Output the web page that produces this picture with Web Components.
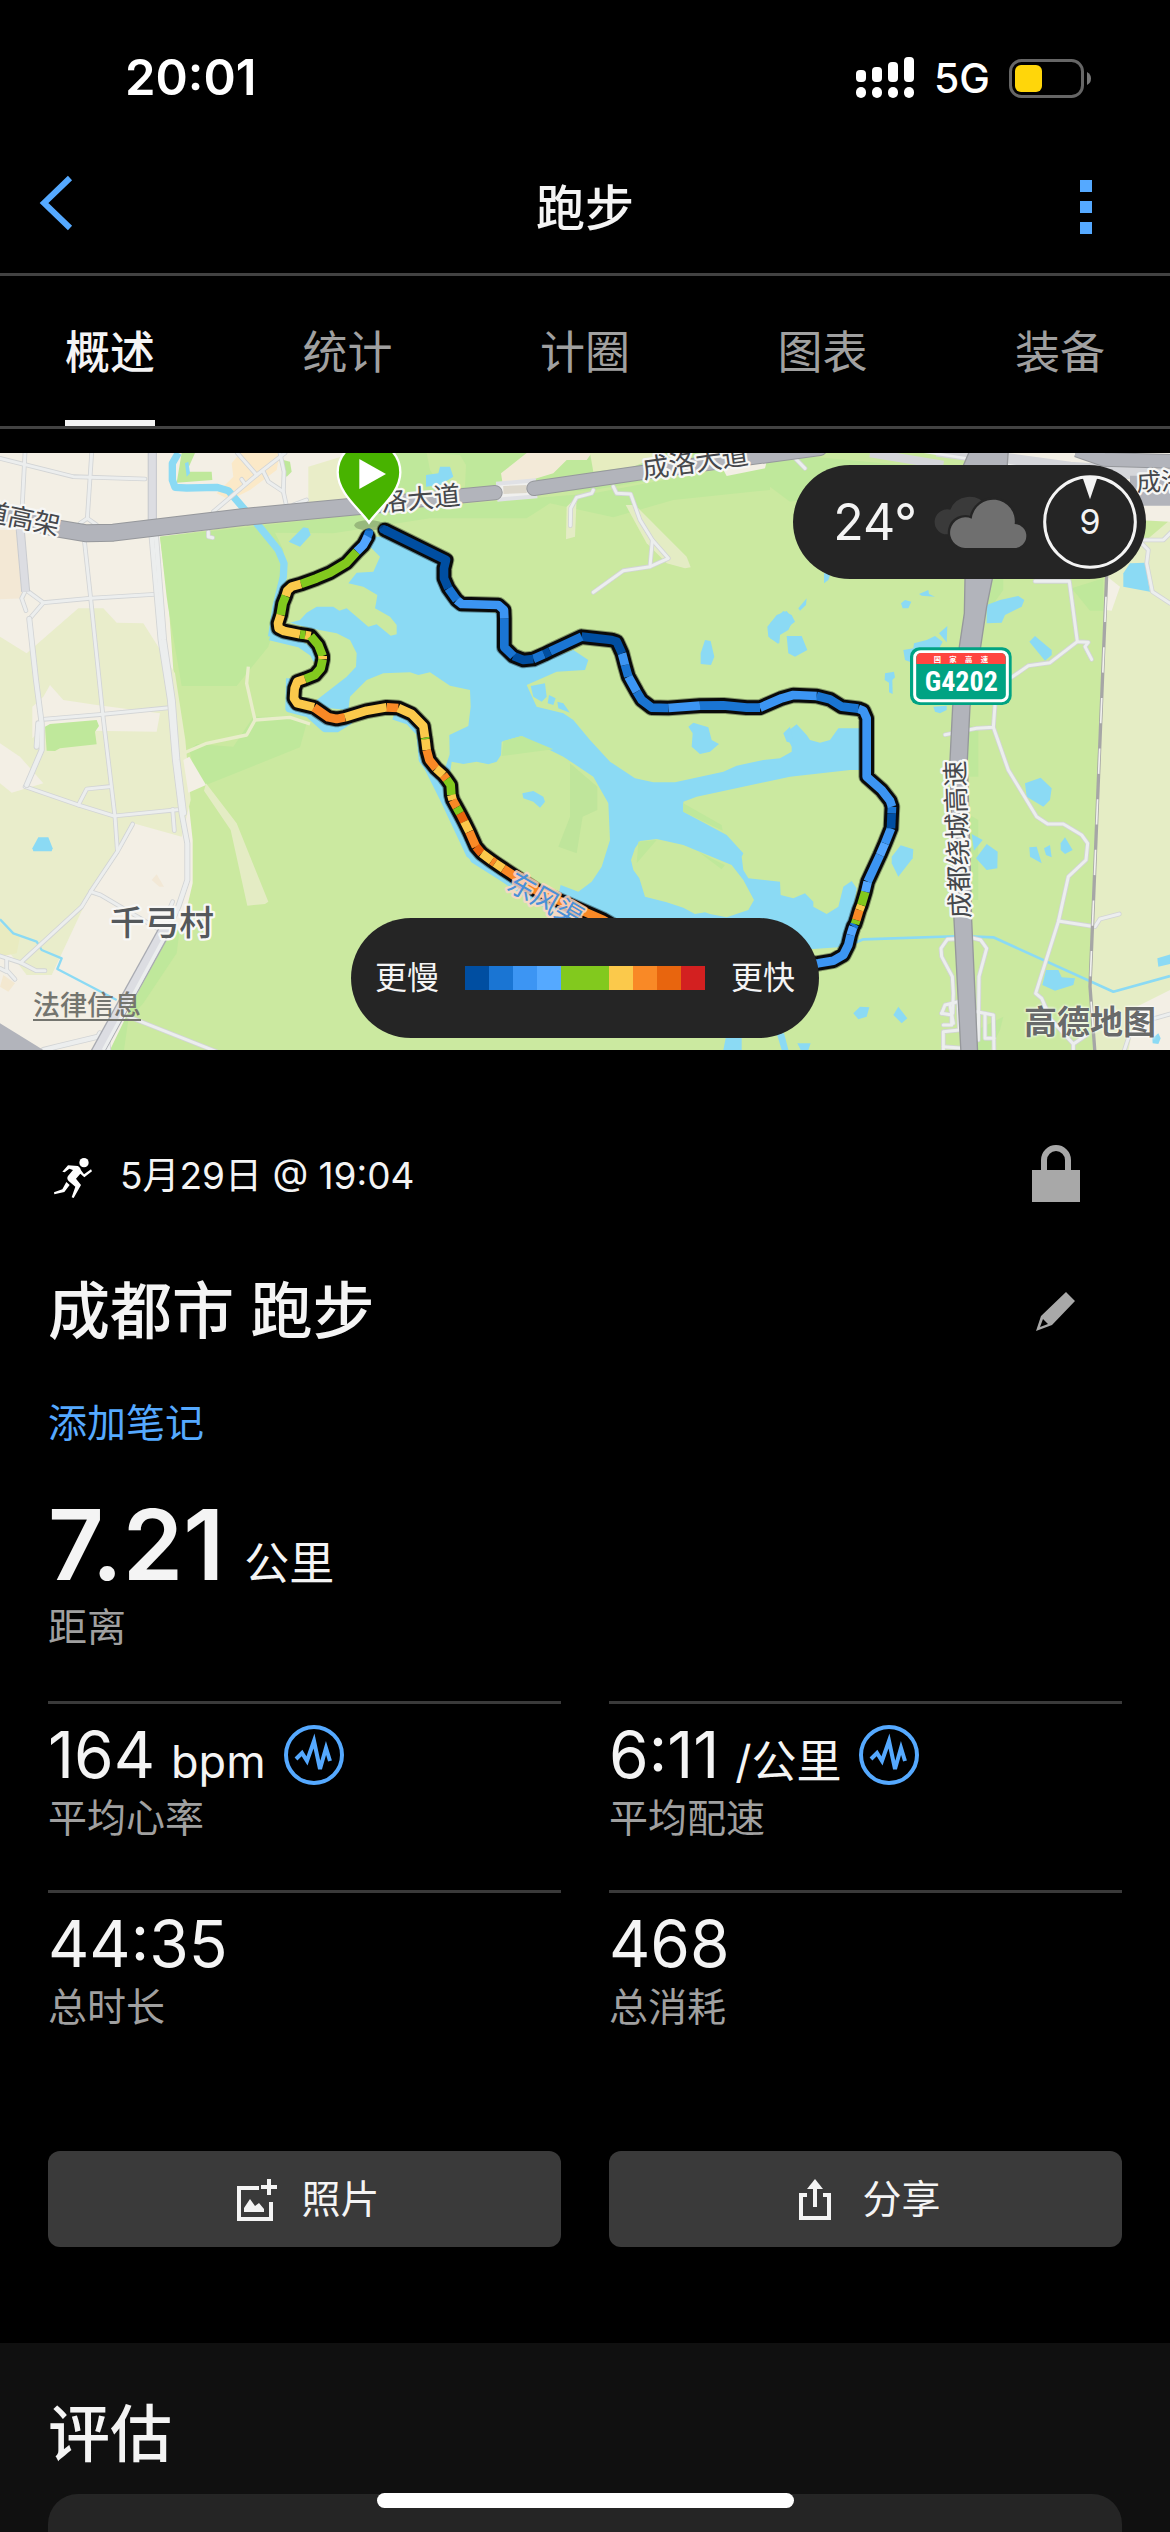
<!DOCTYPE html>
<html lang="zh-CN">
<head>
<meta charset="utf-8">
<meta name="viewport" content="width=device-width, initial-scale=1">
<title>跑步</title>
<style>
  html, body { margin: 0; background: #000; }
  body {
    color: #f4f4f4;
    font-family: Inter, "Noto Sans CJK SC", sans-serif;
    -webkit-font-smoothing: antialiased;
  }
</style>
</head>
<body>
<activity-page>
  <status-bar slot="top" time="20:01" network="5G"></status-bar>
  <nav-header slot="top">跑步</nav-header>
  <tab-bar slot="top">
    <tab-item selected>概述</tab-item>
    <tab-item>统计</tab-item>
    <tab-item>计圈</tab-item>
    <tab-item>图表</tab-item>
    <tab-item>装备</tab-item>
  </tab-bar>
  <route-map>
    <weather-pill slot="weather" wind="9">24°</weather-pill>
    <pace-legend slot="legend"><span slot="slow">更慢</span><span slot="fast">更快</span></pace-legend>
    <a slot="legal" href="#legal">法律信息</a>
    <span slot="provider">高德地图</span>
  </route-map>
  <activity-details date="5月29日 @ 19:04" name="成都市 跑步" note="添加笔记">
    <stat-cell slot="hero" large value="7.21" unit="公里" label="距离"></stat-cell>
    <stat-cell value="164" unit="bpm" label="平均心率" chart></stat-cell>
    <stat-cell value="6:11" unit="/公里" label="平均配速" chart></stat-cell>
    <stat-cell value="44:35" label="总时长"></stat-cell>
    <stat-cell value="468" label="总消耗"></stat-cell>
    <action-button slot="actions" icon="photo">照片</action-button>
    <action-button slot="actions" icon="share">分享</action-button>
  </activity-details>
  <assess-section>评估</assess-section>
  <home-indicator></home-indicator>
</activity-page>

<script>
const define = (name, render) => customElements.define(name, class extends HTMLElement {
  constructor() {
    super();
    this.attachShadow({ mode: 'open' });
  }
  connectedCallback() {
    this.shadowRoot.innerHTML = '<style>*{box-sizing:border-box}:host{display:block;box-sizing:border-box}svg{display:block;flex:none}button{font:inherit;color:inherit;background:none;border:0;padding:0;margin:0}</style>' + render(this);
  }
});

define('activity-page', () => `
  <style>
    :host { display: flex; flex-direction: column; height: 100vh; overflow: hidden; }
    header { flex: none; }
    main { display: flex; flex-direction: column; flex: 1; margin-top: 24px; }
  </style>
  <header><slot name="top"></slot></header>
  <main><slot></slot></main>`);

define('status-bar', el => `
  <style>
    :host { display: flex; justify-content: space-between; align-items: center; padding: 48px 78px 33px 125px; color: #fff; }
    time { font-size: 49px; line-height: 60px; font-weight: 600; }
    div { display: flex; align-items: center; }
    span { font-size: 41px; line-height: 60px; font-weight: 500; margin: 0 19px; }
  </style>
  <time>${el.getAttribute('time')}</time>
  <div>
    <svg width="60" height="42" viewBox="0 0 60 42" fill="#fff">
      <rect x="1" y="13" width="10" height="12" rx="4"/><rect x="17" y="10" width="10" height="15" rx="4"/>
      <rect x="33" y="5" width="10" height="20" rx="4"/><rect x="49" y="0" width="10" height="25" rx="4"/>
      <rect x="1" y="30" width="10" height="11" rx="5"/><rect x="17" y="30" width="10" height="11" rx="5"/>
      <rect x="33" y="30" width="10" height="11" rx="5"/><rect x="49" y="30" width="10" height="11" rx="5"/>
    </svg>
    <span>${el.getAttribute('network')}</span>
    <svg width="83" height="39" viewBox="0 0 83 39">
      <rect x="1.5" y="1.5" width="72" height="36" rx="11" fill="none" stroke="#666" stroke-width="3"/>
      <rect x="6" y="6" width="27" height="27" rx="6" fill="#ffd60a"/>
      <path d="M78 13q4 2 4 6.500t-4 6.500z" fill="#777"/>
    </svg>
  </div>`);

define('nav-header', () => `
  <style>
    :host { display: grid; grid-template-columns: 1fr auto 1fr; align-items: center; height: 135px; padding: 0 36px; border-bottom: 3px solid #424242; }
    h1 { margin: 0; padding-top: 3px; font-size: 49px; line-height: 66px; font-weight: 500; }
    button:last-child { justify-self: end; }
  </style>
  <button type="button" aria-label="返回"><svg width="60" height="66" viewBox="0 0 60 66"><path d="M34 4L8 29L34 54" fill="none" stroke="#55a9ff" stroke-width="6"/></svg></button>
  <h1><slot></slot></h1>
  <button type="button" aria-label="更多"><svg width="60" height="66" viewBox="0 0 60 66" fill="#55a9ff"><path d="M6 6h12v12H6zM6 27h12v12H6zM6 48h12v12H6z"/></svg></button>`);

define('tab-bar', () => `
  <style>
    :host { display: flex; justify-content: space-between; padding: 0 65px; border-bottom: 3px solid #424242; }
  </style><slot></slot>`);

define('tab-item', el => `
  <style>
    button { display: block; height: 150px; padding-top: 9px; font-size: 45px; line-height: 60px; border-bottom: 6px solid transparent; color: #a0a0a0; }
    :host([selected]) button { color: #f4f4f4; font-weight: 500; border-color: #f4f4f4; }
  </style>
  <button type="button" role="tab" aria-selected="${el.hasAttribute('selected')}"><slot></slot></button>`);

/* Map geometry is kept in thirds of a CSS pixel; the lower tiles start at y=900. */
const R = 2310, M = 1170;
const shift = (dx, dy, pts) => pts.trim().split(/\s+/).map(p => { const [x, y] = p.split(',').map(Number); return (x + dx) + ',' + (y + dy); }).join(' ');
const poly = (fill, dx, dy, pts) => `<polygon fill="${fill}" points="${shift(dx, dy, pts)}"/>`;
const polys = (fill, list) => list.map(([dx, dy, p]) => poly(fill, dx, dy, p)).join('');
const line = (stroke, w, dx, dy, pts, cap = 'butt') => `<polyline fill="none" stroke="${stroke}" stroke-width="${w}" stroke-linejoin="round" stroke-linecap="${cap}" points="${shift(dx, dy, pts)}"/>`;
const roads = (list, w = 14) => list.map(([dx, dy, p]) => line('#d2d4d5', w, dx, dy, p, 'round')).join('') + list.map(([dx, dy, p]) => line('#eceeee', w - 5, dx, dy, p, 'round')).join('');

const WATER = '#8bdaf4', GREEN = '#cbe9a0', MID = '#bfe89b', BEIGE = '#f3efe5', OLIVE = '#e9edcb';

const land = () =>
  poly(GREEN, 0, 0, '0,0 3510,0 3510,1860 0,1860') +
  poly(BEIGE, 0, 0, '0,0 1060,0 1060,210 480,290 505,480 520,690 550,900 565,1080 578,1200 578,1330 550,1450 480,1600 400,1700 330,1860 0,1860') +
  poly(OLIVE, 0, 0, '0,590 80,640 235,505 310,505 350,548 430,550 525,700 556,900 572,1080 545,1190 400,1150 270,1360 155,1605 80,1605 0,1500') +
  poly('#f3e8d5', 0, 0, '0,270 55,270 75,475 0,478') +
  poly(BEIGE, 0, 0, '97,800 130,770 150,735 190,780 290,795 480,820 470,875 125,870 97,895') +
  poly(BEIGE, 0, 0, '0,910 60,950 130,1030 35,1058 0,1030') +
  poly('#e9ebc0', 0, 0, '0,1450 60,1490 50,1540 0,1550') +
  poly('#f3e8d0', 0, 0, '10,1605 45,1630 25,1655 0,1640') +
  poly('#f2e8d6', 0, 0, '470,1303 492,1340 478,1340 455,1320') +
  poly('#fbe9c8', 0, 0, '720,39 840,39 830,90 750,150 690,180 650,160 700,110 695,70') +
  poly('#e9edc8', 0, 0, '925,80 1060,39 1060,200 925,190') +
  poly(MID, 0, 0, '850,60 870,65 875,95 860,110 848,100') +
  poly(MID, 0, 0, '545,39 585,39 560,95 635,95 637,120 530,128') +
  poly(MID, 0, 0, '480,290 800,255 1290,200 1650,170 1780,160 2310,60 2310,150 2020,180 1840,232 1650,190 1580,235 1290,235 1000,280 825,278 850,330 850,400 835,520 805,620 710,738 545,738 505,505 500,470') +
  poly(MID, 0, 0, '1060,39 2400,39 2310,60 1780,150 1500,165 1290,200 1060,205') +
  poly(GREEN, 0, 0, '1280,39 1380,45 1398,75 1395,140 1330,150 1290,90') +
  poly('#f3ead8', 0, 0, '1580,39 1775,39 1760,60 1700,60 1660,100 1510,145 1503,100') +
  poly('#e6edc0', 0, 0, '1770,39 2000,39 1900,80 1780,95') +
  poly(BEIGE, 0, 0, '2165,80 2300,65 2295,85 2180,108') +
  poly(MID, 0, 900, '568,30 590,12 700,20 760,-70 870,-70 920,-50 900,22 618,135 580,80') +
  poly(BEIGE, 0, 900, '550,60 568,50 618,135 565,158') +
  poly('#e4ecc4', 0, 900, '618,130 710,250 805,485 795,492 742,497 692,270 612,152') +
  line(OLIVE, 10, 0, 0, '745,680 740,730 765,840 870,832 930,852') +
  line(OLIVE, 10, 0, 0, '765,840 740,885 620,910 550,940') +
  poly(MID, 0, 0, '135,860 150,852 290,840 297,858 285,875 290,913 180,925 165,933 140,932') +
  poly(MID, 0, 900, '540,560 530,640 430,790 385,840 372,930 330,930 480,620') +
  poly('#e4ecc4', M, 0, '530,200 560,170 555,290 528,298') +
  poly('#e4ecc4', M, 0, '707,195 735,195 890,350 902,382 885,385 830,370 770,310') +
  poly(MID, R, 0, '0,39 400,75 100,180 60,185 0,140') +
  poly(MID, R, 0, '660,415 700,415 700,450 650,520') +
  poly(MID, R, 0, '905,445 1000,415 1000,512 960,512') +
  poly(MID, R, 0, '590,850 625,870 625,1010 590,1010') +
  poly(MID, R, 900, '590,220 625,240 625,480 600,480') +
  poly(MID, R, 900, '620,870 700,830 690,870 660,930 620,930') +
  poly('#e5edc5', R, 0, '1012,400 1200,240 1200,1860 975,1860 960,1640 990,900') +
  poly(BEIGE, R, 0, '700,39 1200,39 1200,245 1100,240') +
  poly('#f3f0e6', R, 0, '1012,410 1050,440 1025,512 1008,510') +
  poly(BEIGE, R, 900, '1100,800 1200,750 1200,960 1070,960');

const water = () => polys(WATER, [
  [0, 0, `1110,290 1200,290 1330,370 1335,430 1370,505 1500,520 1510,640 1550,675 1600,670 1720,630 1765,660 1755,690 1670,695
    1580,735 1610,800 1690,820 1720,840 1770,900 1830,965 1905,1015 1960,1027 2025,1027 2170,995 2210,977 2290,960 2340,955 2375,935 2375,920 2355,880 2390,853
    2420,885 2430,900 2460,908 2490,900 2515,865 2600,865 2600,990 2550,990 2370,1010 2090,1070 2050,1085 2050,1115 2180,1185 2230,1240 2225,1250 2230,1290
    2245,1315 2340,1325 2342,1365 2380,1375 2415,1360 2440,1385 2440,1400 2480,1422 2515,1400 2530,1340 2555,1323 2570,1345 2550,1480 2515,1522 2440,1527
    2300,1520 1800,1460 1600,1390 1400,1250 1320,1080 1260,960 1262,880 1340,1000 1330,1000
    1350,940 1355,965 1390,972 1430,965 1465,973 1490,965 1503,945 1505,905 1565,888 1690,950 1780,1010 1825,1090 1830,1200 1805,1280 1775,1325 1735,1355
    1682,1335 1675,1350 1600,1330 1500,1200 1350,1000 1348,885 1405,858 1412,800 1410,750 1350,737 1290,697 1255,705 1230,697 1150,700 1100,720 1050,770 1045,810
    940,800 950,780 1040,710 1068,680 1070,640 1050,600 1010,580 930,565 870,548 900,540 920,518 950,500 1000,500 1018,512 1040,505 1070,530 1105,560 1130,553
    1172,587 1190,583 1190,555 1170,530 1125,505 1128,490 1132,465 1090,440 1045,430 1070,398 1120,395 1140,350 1110,320`]
  ]) +
  /* land along the southern shore, beneath the track */
  poly(GREEN, 0, 0, '1350,1000 1355,965 1390,972 1430,965 1465,973 1490,965 1503,945 1505,905 1565,888 1690,950 1780,1010 1825,1090 1830,1200 1805,1280 1775,1325 1735,1355 1682,1335 1675,1365 1590,1340 1440,1235 1380,1100 1350,1030') +
  poly('#bfe59b', M, 900, '540,70 622,140 622,210 578,230 560,340 505,320 540,230') +
  poly(MID, M, 0, '340,903 395,888 490,928 335,948') +
  poly(MID, M, 900, '880,190 995,255 998,272 880,215') +
  poly(GREEN, M, 900, '723,360 735,325 750,303 800,297 880,315 1025,375 1060,420 1092,480 1075,510 1010,532 960,522 945,517 915,522 880,503 830,487 765,470 748,415 730,390') +
  poly(MID, M, 900, '745,305 800,300 740,370') + poly(MID, M, 900, '925,335 1005,375 995,388') +
  line(WATER, 22, 0, 0, '535,39 517,70 517,120 525,142 560,144 650,142 685,152 780,262 835,330 852,370 850,410 828,500 815,590') +
  line(WATER, 22, 0, 0, '810,590 900,612 940,640 950,660') +
  line(WATER, 24, 0, 0, '870,715 868,805 925,820 975,865 1010,865 1050,840') +
  line(WATER, 18, 0, 0, '1180,830 1225,845 1258,880 1265,960 1330,1050 1350,1120 1420,1260 1530,1330 1800,1450') +
  polys(WATER, [
    [0, 0, '866,305 910,262 925,265 932,285 900,320'], [0, 0, '555,70 565,65 570,100 560,110'],
    [0, 900, '115,292 145,292 158,325 155,334 100,334 97,325'],
    [M, 0, '108,105 145,100 150,80 180,80 190,110 150,135 108,140'],
    [M, 0, '422,738 465,730 470,770 455,785 430,770'], [M, 0, '477,765 497,775 490,795 473,790'], [M, 0, '502,785 520,790 540,818 505,805'],
    [M, 0, '945,600 962,603 973,650 963,675 932,672 932,640'],
    [M, 0, '895,860 910,848 955,862 965,900 987,912 960,935 930,942 905,920 908,880'],
    [M, 0, '1132,560 1160,525 1190,513 1210,540 1195,570 1170,585 1165,612 1135,590'],
    [M, 900, '397,160 430,153 460,170 465,185 450,203 430,185 400,175'],
    [R, 0, '0,550 40,513 65,525 75,545 30,580 28,610 0,595'], [R, 0, '50,588 95,588 112,630 75,650 55,640'],
    [R, 0, '85,505 110,475 108,495 90,512'], [R, 0, '393,490 405,480 424,485 415,505 398,505'], [R, 0, '447,462 475,450 477,462 495,470 455,467'],
    [R, 0, '162,400 182,400 175,420 162,430'], [R, 0, '650,495 690,480 745,468 763,480 755,500 705,525 695,548 650,550'],
    [R, 0, '507,580 532,558 530,607'], [R, 0, '400,630 430,625 432,610 470,600 495,588 518,605 500,640 430,670 405,660'],
    [R, 0, '345,700 372,695 375,712 367,720 368,762 357,757 357,728 344,720'], [R, 0, '778,605 795,588 845,630 845,645 825,662'],
    [R, 0, '490,800 530,797 530,810 510,820 495,815'], [R, 0, '1060,400 1080,370 1125,368 1140,455 1060,440'],
    [R, 900, '765,130 812,113 845,145 840,180 820,200 770,170'], [R, 900, '365,350 392,316 430,328 428,355 385,410 365,370'],
    [R, 900, '605,282 638,300 612,332'], [R, 900, '618,355 650,312 683,335 682,385 650,390'], [R, 900, '778,322 800,320 815,370 780,350'],
    [R, 900, '822,325 840,315 845,352 828,345'], [R, 900, '872,310 885,292 908,330 885,342 872,330'],
    [R, 900, '828,690 865,690 875,712 915,715 910,735 855,752 817,735'], [R, 900, '250,820 270,800 298,802 290,830 265,838'],
    [R, 900, '370,825 385,800 412,835 395,850'], [R, 900, '1162,655 1210,640 1210,670 1165,680'], [R, 900, '1147,895 1165,880 1172,895 1165,912 1148,910'],
    [R, 900, '20,880 42,880 58,940 38,940'], [R, 900, '82,910 122,910 115,930 92,930'], [M, 900, '1010,880 1055,880 1055,940 998,940'],
    [M, 0, '1180,880 1200,860 1210,910 1190,905']
  ]) +
  line(WATER, 8, R, 900, '255,608 280,598 580,588 670,592 1030,755 1200,708') +
  line(WATER, 7, 0, 900, '0,538 40,580 110,605 125,630 185,655 172,687 350,780');

const roadNet = () =>
  roads([[0, 0, '75,39 65,230'], [0, 0, '0,55 220,110 435,117'], [0, 0, '275,39 262,235 240,250'], [0, 0, '262,235 290,255'],
    [0, 0, '253,300 272,475 308,820 345,1130 352,1230'], [0, 0, '480,462 270,475 130,488 85,455'], [0, 0, '75,455 65,475 78,512'], [0, 0, '130,488 88,537'],
    [0, 0, '508,803 308,823 130,838'], [0, 900, '75,140 235,195 342,228 545,208'], [0, 900, '328,140 260,147 235,195'], [0, 900, '518,208 523,272'],
    [0, 900, '398,252 352,335 272,455 245,500 62,668'], [0, 900, '272,455 302,465 480,570'], [0, 900, '0,648 62,668 108,692 135,692'], [0, 900, '20,655 20,690 45,718'], [0, 900, '0,685 20,695'],
    [0, 0, '640,215 770,105 855,39'], [0, 0, '712,39 770,105'], [0, 0, '840,39 852,95 850,155 860,200'], [0, 0, '790,95 805,125 850,155'], [0, 0, '725,118 735,132'], [0, 0, '880,195 920,180'],
    [0, 0, '625,275 625,290 638,293'], [0, 900, '385,830 650,935'], [0, 900, '518,485 505,515'],
    [M, 0, '610,150 605,160 560,172 542,205 541,257'], [M, 0, '670,140 680,160 722,162 750,240 787,300 835,355 780,380 700,392 610,457'], [M, 0, '787,300 780,380'],
    [R, 0, '60,39 105,85'], [R, 0, '795,424 898,424 922,605 955,607 945,620 965,658'], [R, 0, '922,605 840,668 775,677 725,712'], [R, 0, '675,795 670,862 620,865 525,884'],
    [R, 0, '670,862 715,990 800,1130 833,1152 880,1152 935,1185 953,1210 948,1260 895,1310 865,1445 797,1660 815,1675 835,1720'], [R, 900, '865,543 975,560 990,537 1048,522'],
    [R, 0, '1110,300 1180,300 1210,270'], [R, 0, '1110,305 1135,330 1130,370 1147,455 1200,490'],
    [R, 900, '600,595 532,598 513,625 515,650 547,710 550,760 548,820'], [R, 900, '600,592 632,600 650,625 627,710 625,900'],
    [R, 900, '515,820 525,795 565,785 568,870 520,875 520,935'], [R, 900, '515,820 545,825 545,855 520,855'], [R, 900, '540,795 550,850'], [R, 900, '520,920 580,925'],
    [R, 900, '620,815 670,825 672,930'], [R, 900, '645,820 645,895 672,895'], [R, 900, '835,830 910,912 950,885'], [R, 900, '910,912 910,935'], [R, 900, '1060,940 1080,880'], [R, 900, '1155,835 1200,822']
  ]) +
  line('#c9cbcf', 28, 0, 0, '457,39 457,290') + line('#dcdde2', 21, 0, 0, '457,39 457,290') +
  line('#c9cbcf', 27, 0, 0, '60,260 77,455') + line('#dcdde2', 21, 0, 0, '60,260 77,455') +
  roads([[0, 0, '455,290 482,600 510,780 525,960 545,1120 562,1210 562,1320 535,1400 500,1480'], [0, 0, '468,290 492,600 518,780 532,960 552,1120'],
    [0, 0, '88,537 108,720 125,850 125,930 80,1035'], [0, 0, '115,850 110,920'],
    [0, 900, '300,880 295,890 170,920 130,930'], [0, 900, '320,880 325,940'], [0, 900, '0,905 50,935']], 18) +
  line('#a9abb2', 40, 0, 900, '500,560 290,940') + line('#dcdde2', 32, 0, 900, '500,560 290,940') + line('#eceeee', 10, 0, 900, '500,580 310,930') +
  poly('#b2b4bb', 0, 900, '0,850 130,930 130,960 0,960') +
  line('#e0e1e5', 60, 1490, 0, '0,155 120,145') + line('#f0f0ee', 36, 1490, 0, '0,155 120,145') + line('#ddd8cc', 24, 1510, 0, '0,150 70,147') +
  [['0,220 170,265 260,280 340,278 740,230 1200,187', 54], ['1150,190 1485,158', 46], ['1602,145 2000,87 2460,25', 46]].map(([p, w]) => line('#96989c', w, 0, 0, p, 'round') + line('#b2b4bb', w - 6, 0, 0, p, 'round')).join('') +
  line('#d5d6da', 26, R, 0, '300,39 520,75') + line('#d5d6da', 40, R, 0, '500,30 900,85 1200,105') + line('#eceeee', 8, R, 0, '430,30 900,105') +
  line('#96989c', 44, R, 0, '920,30 1000,58 1220,65') + line('#b2b4bb', 38, R, 0, '920,30 1000,58 1220,65') + line('#b2b4bb', 90, R, 0, '1080,152 1220,152') +
  `<polygon fill="#b2b4bb" stroke="#96989c" stroke-width="4" points="${shift(R, 0, '600,30 715,30 710,100 667,417 650,500 632,620 600,800 592,960 605,1440 623,1840 573,1840 552,1440 540,960 548,800 568,620 583,520 585,417 570,100')}"/>` +
  line('#a6a6a6', 10, R, 0, '1010,405 990,900 960,1640 975,1840') +
  `<polyline fill="none" stroke="#f1f1ee" stroke-width="5" stroke-dasharray="76 76" points="${shift(R, 0, '1008,470 990,900 960,1640 975,1840')}"/>`;

const D = '#004ea1', B = '#1a75d3', L = '#3c95f3', S = '#52a5ff', G = '#82c91e', Y = '#fbc94b', O = '#f98926', E = '#e8650e';
const track = [
  [S, '1104,290 1090,315 1070,335'], [G, '1070,335 1040,368 990,398 950,415 903,432'], [Y, '903,432 875,440 862,452 857,468'], [G, '857,468 848,490 842,525'],
  [Y, '842,525 834,550 836,565 852,573 900,583'], [G, '900,583 916,585'], [Y, '916,585 932,588'], [G, '932,588 955,615 968,648'], [Y, '968,648 968,658'], [G, '968,658 962,685 945,705 915,717'],
  [Y, '915,717 892,725 884,745 882,775 892,790 942,802'], [O, '942,802 985,832 1010,837 1035,832'], [Y, '1035,832 1100,812 1160,802'], [O, '1160,802 1195,804'],
  [Y, '1195,804 1235,822 1270,858 1275,893'], [G, '1275,893 1276,898'], [Y, '1276,898 1280,930'], [O, '1280,930 1288,960 1308,985'], [Y, '1308,985 1330,1005'], [O, '1330,1005 1340,1018'], [G, '1340,1018 1352,1035 1354,1065'],
  [Y, '1354,1065 1358,1080'], [O, '1358,1080 1370,1102'], [G, '1370,1102 1380,1120'], [E, '1380,1120 1393,1145'], [Y, '1393,1145 1408,1175'], [O, '1408,1175 1428,1220'], [E, '1428,1220 1445,1240'],
  [Y, '1445,1240 1475,1262'], [O, '1475,1262 1485,1269'], [Y, '1485,1269 1510,1286'], [O, '1510,1286 1610,1352 1810,1440 2000,1550 2300,1580'], [L, '2300,1580 2455,1570 2500,1562 2530,1545 2545,1515 2552,1485'],
  [S, '2552,1485 2560,1460'], [B, '2560,1460 2565,1452'], [G, '2565,1452 2569,1440'], [O, '2569,1440 2578,1410'], [Y, '2578,1410 2584,1395'], [G, '2584,1395 2596,1355'], [S, '2596,1355 2603,1325'], [L, '2603,1325 2640,1245'], [S, '2640,1245 2655,1210'],
  [L, '2655,1210 2673,1165'], [D, '2673,1165 2675,1120'], [B, '2675,1120 2676,1100'], [L, '2676,1100 2670,1082 2645,1050 2600,1010 2600,835 2590,812 2575,806'], [B, '2575,806 2525,800 2490,778 2450,768'],
  [L, '2450,768 2380,765 2345,775 2280,803'], [B, '2280,803 2240,803 2170,796 2100,797'], [L, '2100,797 2005,804'], [B, '2005,804 1955,803 1925,780 1910,755'], [L, '1910,755 1885,710'], [B, '1885,710 1875,675'], [L, '1875,675 1866,640'],
  [D, '1866,640 1850,605 1835,600 1745,590'], [B, '1745,590 1650,634'], [D, '1650,634 1632,643'], [B, '1632,643 1600,657'], [D, '1600,657 1570,660 1540,648'], [B, '1540,648 1513,622 1513,535'], [L, '1513,535 1512,510 1495,495 1385,492 1370,480'],
  [B, '1370,480 1345,445'], [D, '1345,445 1332,415 1332,385 1338,360 1155,270']
];
const route = () => {
  const whole = track.map(([, p]) => p).join(' ');
  return `<polyline fill="none" stroke="#000" stroke-opacity=".35" stroke-width="50" stroke-linejoin="round" stroke-linecap="round" points="${whole}"/>` +
    line('#0a0a0a', 44, 0, 0, whole, 'round') + line(D, 26, 0, 0, '1160,272 1150,268', 'round') + line(B, 26, 0, 0, '1107,278 1100,295', 'round') +
    track.map(([c, p]) => line(c, 26, 0, 0, p)).join('');
};

const label = (t, x, y, r, size = 74, extra = '') => `<text transform="translate(${x} ${y}) rotate(${r})" font-size="${size}" ${extra}>${t}</text>`;
const labels = () => `
  <g fill="#46484c" stroke="#f7f7f5" stroke-width="14" stroke-linejoin="round" paint-order="stroke" font-weight="400" text-anchor="middle" font-family="Noto Sans CJK SC, sans-serif">
    ${label('道高架', 58, 262, 12, 78)}
    ${label('洛大道', 1264, 204, -5, 80)}
    ${label('成洛大道', 2090, 94, -8, 80)}
    ${label('成洛', R + 1174, 151, -2, 74)}
    ${label('成都绕城高速', R + 591, 1197, -92, 79)}
    ${label('千弓村', 486, 1486, 0, 104, 'fill="#54585b" font-weight="500"')}
    ${label('东风渠', 1622, 1406, 30, 82, 'fill="#4990d8" stroke="#fbd8c8" stroke-opacity=".85"')}
  </g>`;

const shield = () => `
  <g transform="translate(${R} 0)">
    <rect x="420" y="622" width="305" height="173" rx="28" fill="#00a383"/>
    <rect x="434" y="635" width="278" height="147" rx="18" fill="#00a383" stroke="#fff" stroke-width="9"/>
    <path d="M439 672V655q0-16 16-16h236q16 0 16 16v17z" fill="#ff4540"/>
    <g fill="#fff" font-weight="700" text-anchor="middle">
      <g font-family="Noto Sans CJK SC, sans-serif" font-size="22"><text x="502" y="665">国</text><text x="549" y="665">家</text><text x="596" y="665">高</text><text x="643" y="665">速</text></g>
      <text x="574" y="753" font-family="Roboto Condensed, Open Sans Condensed, Liberation Sans Narrow, Roboto, sans-serif" font-size="84">G4202</text>
    </g>
  </g>`;

const pin = () => `
  <ellipse cx="1107" cy="256" rx="44" ry="16" fill="#000" opacity=".2"/>
  <path d="M1107 248C1080 208 1013 160 1013 97a94 94 0 0 1 188 0C1201 160 1134 208 1107 248Z" fill="#48b300" stroke="#fff" stroke-width="7"/>
  <path d="M1078 57L1158 102L1078 147Z" fill="#fff"/>`;

define('route-map', () => `
  <style>
    :host { position: relative; height: 597px; flex: none; overflow: hidden; background: ${GREEN}; }
    svg { width: 100%; height: 100%; }
    slot { display: block; position: absolute; }
    slot[name=weather] { top: 12px; right: 24px; }
    slot[name=legend] { bottom: 12px; left: 0; right: 0; }
    slot[name=legal] { left: 33px; bottom: 26px; }
    slot[name=provider] { right: 14px; bottom: 4px; }
    ::slotted(a) { color: #74756f; font-size: 27px; line-height: 36px; font-weight: 500; text-underline-offset: 4px; }
    ::slotted(span) { color: #686a6a; font-size: 33px; line-height: 48px; font-weight: 700; text-shadow: 0 0 3px #fff, 0 0 3px #fff; }
  </style>
  <svg viewBox="0 39 3510 1791" preserveAspectRatio="xMidYMid slice" role="img" aria-label="路线">
    ${land()}${water()}${roadNet()}${route()}${labels()}${shield()}${pin()}
  </svg>
  <slot name="weather"></slot><slot name="legend"></slot><slot name="legal"></slot><slot name="provider"></slot>`);

define('weather-pill', el => `
  <style>
    :host { display: flex; align-items: center; height: 114px; padding: 0 8px 0 40px; border-radius: 57px; background: #252525; }
    span { font-size: 50px; line-height: 60px; margin-right: 14px; }
    .cloud { margin-right: 15px; }
  </style>
  <span><slot></slot></span>
  <svg class="cloud" width="96" height="55" viewBox="480 165 288 165">
    <path d="M520 283a38 38 0 1 1 18-74a62 62 0 0 1 108-12L640 283Z" fill="#3a3a3a"/>
    <path d="M582 324a46 46 0 1 1 20-88a64 64 0 0 1 129 16a36 36 0 0 1-2 72Z" fill="#6f6f6f" stroke="#252525" stroke-width="14" paint-order="stroke"/>
  </svg>
  <svg width="96" height="96" viewBox="813 101 288 288">
    <circle cx="957" cy="245" r="136" fill="none" stroke="#f4f4f4" stroke-width="9"/>
    <path d="M935 112H979L957 177Z" fill="#f4f4f4"/>
    <text x="957" y="281" text-anchor="middle" font-size="102" font-weight="400" fill="#f4f4f4">${el.getAttribute('wind')}</text>
  </svg>`);

define('pace-legend', () => `
  <style>
    :host { display: flex; align-items: center; width: fit-content; height: 120px; margin: 0 auto; padding: 0 24px; gap: 26px; border-radius: 60px; background: #252525; font-size: 32px; line-height: 48px; }
    div { display: flex; }
    i { width: 24px; height: 24px; }
  </style>
  <slot name="slow"></slot>
  <div>${['#004ea1', '#1a75d3', '#3c95f3', '#55a9ff', '#82c91e', '#82c91e', '#fbc94b', '#f98926', '#e8650e', '#d32020'].map(c => `<i style="background:${c}"></i>`).join('')}</div>
  <slot name="fast"></slot>`);

define('activity-details', el => `
  <style>
    :host { padding: 93px 48px 96px; flex: none; }
    .row { display: flex; align-items: center; }
    .date { height: 60px; font-size: 37px; gap: 12px; }
    .date span, h2 { flex: 1; }
    .icon { width: 60px; height: 60px; display: grid; place-items: center; margin-right: 36px; }
    .title { margin-top: 67px; }
    h2 { margin: 0; font-size: 62px; line-height: 84px; font-weight: 500; }
    a { display: block; width: fit-content; margin-top: 39px; font-size: 39px; line-height: 60px; color: #55a9ff; text-decoration: none; }
    .hero { margin-top: 36px; }
    .grid { display: grid; grid-template-columns: 1fr 1fr; column-gap: 48px; margin-top: 47px; }
    .actions { display: grid; grid-template-columns: 1fr 1fr; gap: 48px; margin-top: 72px; }
  </style>
  <div class="row date">
    <svg width="60" height="60" viewBox="0 0 180 180" fill="#fff">
      <circle cx="108" cy="59" r="14"/>
      <path d="M43 86L60 67L90 69Q98 74 99 82L108 94L129 79L132 85L109 103L97 92L84 107L99 126L77 165L71 163L82 131L62 114Q55 107 60 99L75 81L64 77L50 88Z"/>
      <path d="M55 117L65 126L49 147L19 154L18 148L43 139Z"/>
    </svg>
    <span>${el.getAttribute('date')}</span>
    <button class="icon" type="button" aria-label="隐私"><svg width="48" height="60" viewBox="0 0 48 60"><path d="M12 28V17a12 12 0 0 1 24 0v11" fill="none" stroke="#a8a8a8" stroke-width="6"/><path d="M0 27h48v32H0z" fill="#a8a8a8"/></svg></button>
  </div>
  <div class="row title">
    <h2>${el.getAttribute('name')}</h2>
    <button class="icon" type="button" aria-label="编辑"><svg width="42" height="42" viewBox="0 0 42 42"><path fill="#a8a8a8" fill-rule="evenodd" d="M31 1L40 10L17 34L1 40L6 25ZM8 28L5 36L13 33Z"/></svg></button>
  </div>
  <a href="#note">${el.getAttribute('note')}</a>
  <div class="hero"><slot name="hero"></slot></div>
  <div class="grid"><slot></slot></div>
  <div class="actions"><slot name="actions"></slot></div>`);

define('stat-cell', el => `
  <style>
    :host { height: 189px; border-top: 3px solid #3a3a3a; padding-top: 15px; }
    :host([large]) { height: auto; border: 0; padding: 0; }
    .value { display: flex; align-items: center; height: 72px; }
    .text { display: flex; align-items: baseline; gap: 16px; }
    :host([large]) .text { gap: 20px; }
    b { font-size: 64px; line-height: 72px; font-weight: 400; }
    .unit { font-size: 45px; line-height: 60px; }
    :host([large]) .value { height: 111px; }
    :host([large]) b { font-size: 97px; line-height: 108px; font-weight: 600; }
    .label { font-size: 39px; line-height: 54px; color: #a0a0a0; }
    svg { margin-left: 18px; }
  </style>
  <div class="value"><div class="text"><b>${el.getAttribute('value')}</b>${el.hasAttribute('unit') ? `<span class="unit">${el.getAttribute('unit')}</span>` : ''}</div>
  ${el.hasAttribute('chart') ? '<svg width="60" height="60" viewBox="0 0 60 60" fill="none" stroke="#55a9ff" stroke-width="4"><circle cx="30" cy="30" r="28"/><path d="M12 34L18 28L23 36L30 16L36 44L42 23L46 36"/></svg>' : ''}</div>
  <div class="label">${el.getAttribute('label')}</div>`);

const ICONS = {
  photo: '<path d="M30 13H10V44H42V27" fill="none" stroke="#f4f4f4" stroke-width="4"/><path d="M40 4v16M32 12h16" stroke="#f4f4f4" stroke-width="4"/><path d="M15 37V33L21 24L26 31L30 28L35 34V37Z" fill="#f4f4f4"/>',
  share: '<path d="M17 20H11V43H39V20H33" fill="none" stroke="#f4f4f4" stroke-width="4"/><path d="M25 32V11" stroke="#f4f4f4" stroke-width="4"/><path d="M25 4L33 14H17Z" fill="#f4f4f4"/>'
};
define('action-button', el => `
  <style>
    button { display: flex; align-items: center; justify-content: center; gap: 24px; width: 100%; height: 96px; border-radius: 12px; background: #3a3a3a; font-size: 39px; line-height: 54px; }
  </style>
  <button type="button"><svg width="48" height="48" viewBox="0 0 48 48">${ICONS[el.getAttribute('icon')]}</svg><slot></slot></button>`);

define('assess-section', () => `
  <style>
    :host { display: flex; flex-direction: column; flex: 1; background: #101010; padding: 48px 48px 0; }
    h2 { margin: 0 0 16px; font-size: 62px; line-height: 87px; font-weight: 500; }
    div { flex: 1; background: #252525; border-radius: 30px 30px 0 0; }
  </style>
  <h2><slot></slot></h2><div></div>`);

define('home-indicator', () => `
  <style>:host { position: fixed; left: 0; right: 0; bottom: 24px; width: 417px; height: 15px; margin: 0 auto; border-radius: 8px; background: #fff; }</style>`);
</script>
</body>
</html>
